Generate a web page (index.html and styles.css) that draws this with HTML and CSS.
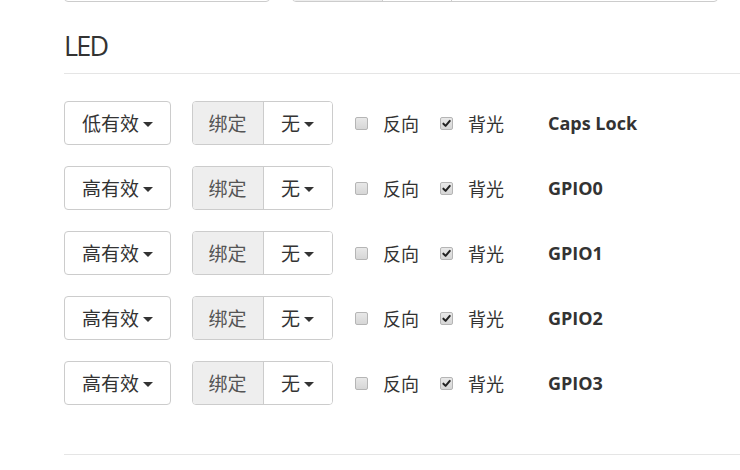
FILE: index.html
```html
<!DOCTYPE html>
<html lang="zh-CN">
<head>
<meta charset="utf-8">
<link rel="stylesheet" href="styles.css">
</head>
<body>
<div class="page">
  <div class="row row-top">
    <button class="btn btn-wide">&nbsp;</button>
    <div class="input-group ig-wide">
      <span class="addon addon-wide">&nbsp;</span>
      <span class="ig-btn ig-mid">&nbsp;</span>
      <span class="ig-input"></span>
    </div>
  </div>

  <h3 class="title">LED</h3>

  <div class="rows">
    <div class="row">
      <button class="btn">低有效<span class="caret"></span></button>
      <div class="input-group"><span class="addon">绑定</span><span class="ig-btn">无<span class="caret"></span></span></div>
      <label class="check"><span class="box"></span>反向</label>
      <label class="check"><span class="box checked"><svg viewBox="0 0 12 12"><path d="M2.6 6.2 L5 8.6 L9.6 3.2" /></svg></span>背光</label>
      <span class="name">Caps Lock</span>
    </div>
    <div class="row">
      <button class="btn">高有效<span class="caret"></span></button>
      <div class="input-group"><span class="addon">绑定</span><span class="ig-btn">无<span class="caret"></span></span></div>
      <label class="check"><span class="box"></span>反向</label>
      <label class="check"><span class="box checked"><svg viewBox="0 0 12 12"><path d="M2.6 6.2 L5 8.6 L9.6 3.2" /></svg></span>背光</label>
      <span class="name">GPIO0</span>
    </div>
    <div class="row">
      <button class="btn">高有效<span class="caret"></span></button>
      <div class="input-group"><span class="addon">绑定</span><span class="ig-btn">无<span class="caret"></span></span></div>
      <label class="check"><span class="box"></span>反向</label>
      <label class="check"><span class="box checked"><svg viewBox="0 0 12 12"><path d="M2.6 6.2 L5 8.6 L9.6 3.2" /></svg></span>背光</label>
      <span class="name">GPIO1</span>
    </div>
    <div class="row">
      <button class="btn">高有效<span class="caret"></span></button>
      <div class="input-group"><span class="addon">绑定</span><span class="ig-btn">无<span class="caret"></span></span></div>
      <label class="check"><span class="box"></span>反向</label>
      <label class="check"><span class="box checked"><svg viewBox="0 0 12 12"><path d="M2.6 6.2 L5 8.6 L9.6 3.2" /></svg></span>背光</label>
      <span class="name">GPIO2</span>
    </div>
    <div class="row">
      <button class="btn">高有效<span class="caret"></span></button>
      <div class="input-group"><span class="addon">绑定</span><span class="ig-btn">无<span class="caret"></span></span></div>
      <label class="check"><span class="box"></span>反向</label>
      <label class="check"><span class="box checked"><svg viewBox="0 0 12 12"><path d="M2.6 6.2 L5 8.6 L9.6 3.2" /></svg></span>背光</label>
      <span class="name">GPIO3</span>
    </div>
  </div>

  <hr class="rule">
</div>
</body>
</html>
```

FILE: styles.css
```css
* { box-sizing: border-box; }
html, body { margin: 0; padding: 0; background: #fff; overflow: hidden; }
body {
  font-family: "Open Sans", "Noto Sans CJK SC", sans-serif;
  color: #333;
  font-size: 19px;
}
.page {
  padding-left: 64px;
}
.row {
  display: flex;
  align-items: center;
  height: 44px;
}
.row-top {
  margin-top: -42px;
}
.rows {
  display: flex;
  flex-direction: column;
  gap: 21px;
  margin-top: 27px;
}
.btn {
  height: 44px;
  width: 107px;
  border: 1px solid #ccc;
  border-radius: 4px;
  background: #fff;
  color: #333;
  font-family: "Open Sans", "Noto Sans CJK SC", sans-serif;
  font-size: 19px;
  padding: 0 0 0 17px;
  display: flex;
  align-items: center;
  margin-right: 21px;
}
.btn-wide { width: 206px; margin-right: 22px; }
.caret {
  display: inline-block;
  width: 0;
  height: 0;
  border-top: 5px solid #333;
  border-left: 5px solid transparent;
  border-right: 5px solid transparent;
  margin-left: 4px;
  margin-top: 2px;
}
.input-group {
  display: flex;
  height: 44px;
  width: 141px;
  border: 1px solid #ccc;
  border-radius: 4px;
  overflow: hidden;
  margin-right: 22px;
}
.ig-wide { width: 426px; margin-right: 0; }
.addon {
  background: #eee;
  color: #555;
  width: 71px;
  border-right: 1px solid #ccc;
  display: flex;
  align-items: center;
  justify-content: center;
  padding-right: 1px;
}
.addon-wide { width: 90px; }
.ig-btn {
  flex: 1;
  display: flex;
  align-items: center;
  padding-left: 17px;
  background: #fff;
}
.ig-mid { flex: 0 0 69px; border-right: 1px solid #ccc; }
.ig-input { flex: 1; }
.title {
  margin: 0;
  padding-top: 27px;
  padding-bottom: 11px;
  font-size: 27px;
  font-weight: 400;
  line-height: 33px;
  letter-spacing: -1.8px;
  border-bottom: 1px solid #e5e5e5;
}
.check {
  display: flex;
  align-items: center;
  margin-right: 21px;
  color: #333;
  font-size: 18px;
}
.box {
  width: 13px;
  height: 13px;
  border: 1px solid #b5b5b5;
  border-radius: 2px;
  background: linear-gradient(#e8e8e8, #d6d6d6);
  margin-right: 15px;
  display: flex;
  align-items: center;
  justify-content: center;
}
.box svg { width: 11px; height: 11px; }
.box svg path {
  fill: none;
  stroke: #222;
  stroke-width: 2.2;
  stroke-linecap: round;
  stroke-linejoin: round;
}
.name {
  font-weight: 700;
  margin-left: 23px;
  font-size: 18px;
}
.rule {
  margin: 49px 0 0 0;
  border: 0;
  border-top: 1px solid #e5e5e5;
  height: 0;
}
```
